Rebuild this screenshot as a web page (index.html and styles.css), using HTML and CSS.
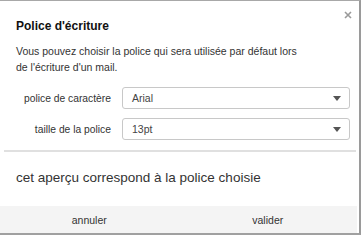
FILE: index.html
```html
<!DOCTYPE html>
<html lang="fr">
<head>
    <meta charset="UTF-8">
    <title>Police d'écriture</title>
    <link rel="stylesheet" href="styles.css">
</head>
<body>
    <div class="dialog">
        <div class="dialog-header">
            <div class="dialog-title">Police d'écriture</div>
            <svg class="close-btn" width="8" height="8" viewBox="0 0 8 8">
                <path d="M1 1 L7 7 M7 1 L1 7" stroke="#9a9a9a" stroke-width="1.6"/>
            </svg>
        </div>

        <p class="intro">Vous pouvez choisir la police qui sera utilisée par défaut lors<br>de l'écriture d'un mail.</p>

        <div class="form">
            <div class="form-row">
                <label class="form-label">police de caractère</label>
                <div class="select">
                    <span>Arial</span>
                    <span class="caret"></span>
                </div>
            </div>
            <div class="form-row">
                <label class="form-label">taille de la police</label>
                <div class="select">
                    <span>13pt</span>
                    <span class="caret"></span>
                </div>
            </div>
        </div>

        <div class="divider"></div>

        <div class="preview">cet aperçu correspond à la police choisie</div>

        <div class="dialog-footer">
            <div class="footer-btn">annuler</div>
            <div class="footer-btn">valider</div>
        </div>
    </div>
</body>
</html>
```

FILE: styles.css
```css
html, body {
    margin: 0;
    padding: 0;
    background: #ffffff;
}

body {
    font-family: "Liberation Sans", Arial, sans-serif;
    color: #333333;
}

.dialog {
    width: 361px;
    height: 235px;
    box-sizing: border-box;
    border-top: 1px solid #a8a8a8;
    border-right: 2px solid #9a9a9a;
    border-bottom: 2px solid #a0a0a0;
    display: flex;
    flex-direction: column;
    background: #ffffff;
}

.dialog-header {
    display: flex;
    justify-content: space-between;
    align-items: flex-start;
    padding: 17px 7px 0 16px;
}

.dialog-title {
    font-size: 12px;
    font-weight: bold;
    color: #111111;
    line-height: 16px;
}

.close-btn {
    margin-top: -7px;
}

.intro {
    margin: 9px 0 0 16px;
    font-size: 10.5px;
    line-height: 16px;
    color: #333333;
}

.form {
    display: flex;
    flex-direction: column;
    gap: 9px;
    margin-top: 12px;
}

.form-row {
    display: flex;
    align-items: center;
    gap: 11px;
}

.form-label {
    width: 111px;
    text-align: right;
    font-size: 10.3px;
    color: #333333;
}

.select {
    width: 228px;
    height: 22px;
    box-sizing: border-box;
    border: 1px solid #c8c8c8;
    border-radius: 3px;
    display: flex;
    align-items: center;
    justify-content: space-between;
    padding: 0 8px 0 9px;
    font-size: 10.5px;
    color: #444444;
}

.caret {
    width: 0;
    height: 0;
    border-left: 4.5px solid transparent;
    border-right: 4.5px solid transparent;
    border-top: 5px solid #555555;
}

.divider {
    height: 2px;
    background: #e0e0e0;
    margin: 10px 3px 0 4px;
}

.preview {
    margin: 18px 0 0 16px;
    font-size: 13.5px;
    line-height: 16px;
    color: #333333;
}

.dialog-footer {
    margin-top: auto;
    height: 27px;
    background: #f4f4f4;
    margin-right: 2px;
    display: flex;
}

.footer-btn {
    flex: 1;
    display: flex;
    align-items: center;
    justify-content: center;
    font-size: 10.5px;
    color: #333333;
}
```
